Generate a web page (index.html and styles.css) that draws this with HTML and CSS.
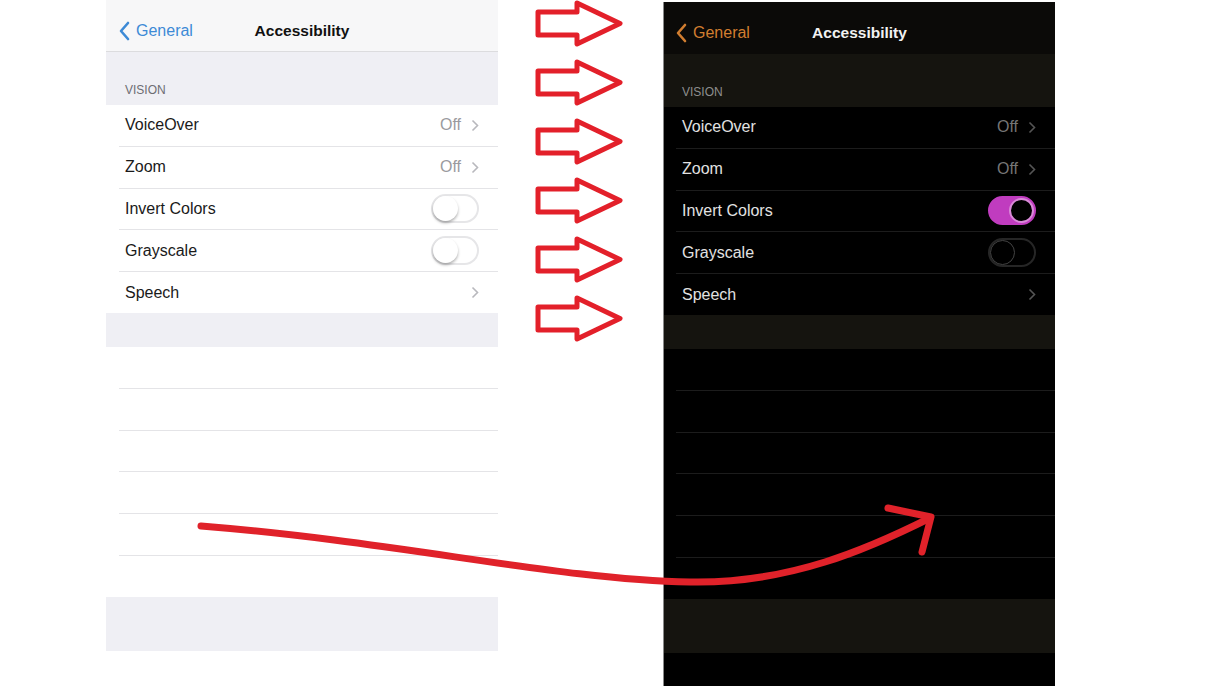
FILE: index.html
```html
<!DOCTYPE html>
<html lang="en">
<head>
    <meta charset="UTF-8">
    <title>Accessibility - Invert Colors</title>
    <link rel="stylesheet" href="styles.css">
</head>
<body>

    <div class="page">
        <!-- light phone -->
        <div class="phone light">
            <div class="nav">
                <span class="back">
                    <svg width="12" height="20" viewBox="0 0 12 20"><polyline points="10,2 3,10 10,18" fill="none" stroke="currentColor" stroke-width="2.6" stroke-linecap="round" stroke-linejoin="round"/></svg>
                    General
                </span>
                <span class="title">Accessibility</span>
            </div>
            <div class="band head"><span>VISION</span></div>
            <div class="list">
                <div class="row"><span>VoiceOver</span><span class="detail">Off <svg class="chev" width="8" height="13" viewBox="0 0 8 13"><polyline points="1.5,1.5 6.5,6.5 1.5,11.5" fill="none" stroke="currentColor" stroke-width="1.6"/></svg></span></div>
                <div class="row"><span>Zoom</span><span class="detail">Off <svg class="chev" width="8" height="13" viewBox="0 0 8 13"><polyline points="1.5,1.5 6.5,6.5 1.5,11.5" fill="none" stroke="currentColor" stroke-width="1.6"/></svg></span></div>
                <div class="row"><span>Invert Colors</span><span class="toggle"><i></i></span></div>
                <div class="row"><span>Grayscale</span><span class="toggle"><i></i></span></div>
                <div class="row"><span>Speech</span><span class="detail"><svg class="chev" width="8" height="13" viewBox="0 0 8 13"><polyline points="1.5,1.5 6.5,6.5 1.5,11.5" fill="none" stroke="currentColor" stroke-width="1.6"/></svg></span></div>
            </div>
            <div class="band"></div>
            <div class="list empty">
                <div class="row"></div><div class="row"></div><div class="row"></div>
                <div class="row"></div><div class="row"></div><div class="row"></div>
            </div>
            <div class="band foot"></div>
        </div>

        <!-- arrows between the two -->
        <div class="arrows">
            <svg class="arrow" viewBox="0 0 88 47"><polygon points="3,12 42,12 42,3 85,23.5 42,44 42,35 3,35"/></svg>
            <svg class="arrow" viewBox="0 0 88 47"><polygon points="3,12 42,12 42,3 85,23.5 42,44 42,35 3,35"/></svg>
            <svg class="arrow" viewBox="0 0 88 47"><polygon points="3,12 42,12 42,3 85,23.5 42,44 42,35 3,35"/></svg>
            <svg class="arrow" viewBox="0 0 88 47"><polygon points="3,12 42,12 42,3 85,23.5 42,44 42,35 3,35"/></svg>
            <svg class="arrow" viewBox="0 0 88 47"><polygon points="3,12 42,12 42,3 85,23.5 42,44 42,35 3,35"/></svg>
            <svg class="arrow" viewBox="0 0 88 47"><polygon points="3,12 42,12 42,3 85,23.5 42,44 42,35 3,35"/></svg>
        </div>

        <!-- dark (inverted) phone -->
        <div class="phone dark">
            <div class="nav">
                <span class="back">
                    <svg width="12" height="20" viewBox="0 0 12 20"><polyline points="10,2 3,10 10,18" fill="none" stroke="currentColor" stroke-width="2.6" stroke-linecap="round" stroke-linejoin="round"/></svg>
                    General
                </span>
                <span class="title">Accessibility</span>
            </div>
            <div class="band head"><span>VISION</span></div>
            <div class="list">
                <div class="row"><span>VoiceOver</span><span class="detail">Off <svg class="chev" width="8" height="13" viewBox="0 0 8 13"><polyline points="1.5,1.5 6.5,6.5 1.5,11.5" fill="none" stroke="currentColor" stroke-width="1.6"/></svg></span></div>
                <div class="row"><span>Zoom</span><span class="detail">Off <svg class="chev" width="8" height="13" viewBox="0 0 8 13"><polyline points="1.5,1.5 6.5,6.5 1.5,11.5" fill="none" stroke="currentColor" stroke-width="1.6"/></svg></span></div>
                <div class="row"><span>Invert Colors</span><span class="toggle on"><i></i></span></div>
                <div class="row"><span>Grayscale</span><span class="toggle"><i></i></span></div>
                <div class="row"><span>Speech</span><span class="detail"><svg class="chev" width="8" height="13" viewBox="0 0 8 13"><polyline points="1.5,1.5 6.5,6.5 1.5,11.5" fill="none" stroke="currentColor" stroke-width="1.6"/></svg></span></div>
            </div>
            <div class="band"></div>
            <div class="list empty">
                <div class="row"></div><div class="row"></div><div class="row"></div>
                <div class="row"></div><div class="row"></div><div class="row"></div>
            </div>
            <div class="band foot"></div>
        </div>
    </div>

    <!-- hand drawn curved arrow on top -->
    <svg class="curve" width="1220" height="686" viewBox="0 0 1220 686">
        <path d="M201 526 C 400 542, 560 580, 690 582 C 790 584, 870 548, 930 518" fill="none" stroke="#e0222a" stroke-width="7" stroke-linecap="round"/>
        <polyline points="888,508 931,517 922,552" fill="none" stroke="#e0222a" stroke-width="7" stroke-linecap="round" stroke-linejoin="round"/>
    </svg>

</body>
</html>
```

FILE: styles.css
```css
body {
    margin: 0;
    background: #fff;
    font-family: "Liberation Sans", Arial, sans-serif;
    font-size: 16px;
    overflow: hidden;
}
.page {
    display: flex;
    padding-left: 106px;
    height: 686px;
}
.phone {
    width: 392px;
    display: flex;
    flex-direction: column;
}
.nav {
    height: 52px;
    padding-top: 10px;
    display: flex;
    align-items: center;
    position: relative;
    box-sizing: border-box;
    flex-shrink: 0;
}
.back {
    display: flex;
    align-items: center;
    gap: 6px;
    padding-left: 12px;
}
.title {
    position: absolute;
    left: 0;
    right: 0;
    text-align: center;
    font-weight: bold;
    font-size: 15.5px;
    pointer-events: none;
}
.band {
    height: 34px;
    flex-shrink: 0;
}
.band.head {
    height: 53px;
    display: flex;
    align-items: flex-end;
    padding: 0 19px 8px;
    box-sizing: border-box;
    font-size: 12px;
}
.band.foot {
    height: 54px;
}
.row {
    height: 40.8px;
    margin-left: 13px;
    padding: 0 19px 0 6px;
    display: flex;
    align-items: center;
    justify-content: space-between;
    border-bottom: 1px solid transparent;
}
.row:last-child {
    border-bottom: none;
}
.detail {
    display: flex;
    align-items: center;
    gap: 10px;
}
.toggle {
    width: 48px;
    height: 29px;
    border-radius: 15px;
    box-sizing: border-box;
    position: relative;
}
.toggle i {
    position: absolute;
    top: 0;
    left: 0;
    width: 25px;
    height: 25px;
    border-radius: 50%;
    box-sizing: border-box;
}

/* light */
.light .nav {
    background: #f7f7f8;
    border-bottom: 1px solid #dcdcde;
    color: #111;
}
.light .back { color: #3d8ad6; }
.light .band { background: #efeff4; color: #6d6d72; }
.light .list { background: #fff; color: #1a1a1a; }
.light .row { border-bottom-color: #e4e4e7; }
.light .row:last-child { border-bottom-color: transparent; }
.light .detail { color: #9a9a9e; }
.light .chev { color: #b8b8bd; }
.light .toggle { border: 2px solid #e6e6e8; background: #fff; }
.light .toggle i { background: #fff; box-shadow: 0 2px 3px rgba(0,0,0,0.3); }

/* arrows */
.arrows {
    width: 165px;
    display: flex;
    flex-direction: column;
    gap: 12px;
    padding-left: 37px;
    box-sizing: border-box;
}
.arrow {
    width: 88px;
    height: 47px;
    flex-shrink: 0;
}
.arrow polygon {
    fill: #fff;
    stroke: #e3202a;
    stroke-width: 5;
    stroke-linejoin: round;
}

/* dark */
.dark {
    margin-top: 2px;
    background: #000;
    border-left: 1px solid #8a8a8a;
    box-sizing: border-box;
}
.dark .back { padding-left: 11px; }
.dark .row { margin-left: 12px; }
.dark .band.head { padding-left: 18px; }
.dark .nav { background: #0b0a08; color: #f2f2f2; }
.dark .back { color: #d27e30; }
.dark .band { background: #15140f; color: #8e8e8e; }
.dark .list { background: #000; color: #e2e2e2; }
.dark .row { border-bottom-color: #1c1c1c; }
.dark .row:last-child { border-bottom-color: transparent; }
.dark .detail { color: #767676; }
.dark .chev { color: #555; }
.dark .toggle { border: 2px solid #262626; background: #000; }
.dark .toggle i { background: #000; border: 1px solid #444; }
.dark .toggle.on { background: #c03cbf; border-color: #c03cbf; }
.dark .toggle.on i { left: auto; right: 0; border: 2px solid #d98ad8; }

.curve {
    position: absolute;
    top: 0;
    left: 0;
    pointer-events: none;
}
```
